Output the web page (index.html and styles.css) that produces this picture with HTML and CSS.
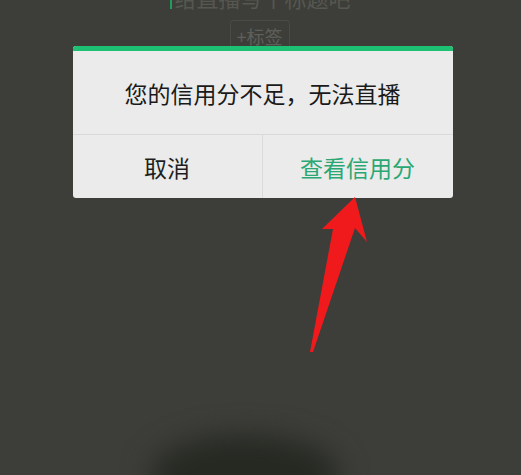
FILE: index.html
```html
<!DOCTYPE html>
<html>
<head>
<meta charset="utf-8">
<link rel="stylesheet" href="styles.css">
</head>
<body>
<div class="page">
  <div class="bg-title"><span class="cursor"></span>给直播写个标题吧</div>
  <div class="tag">+标签</div>
  <div class="dialog">
    <div class="dialog-bar"></div>
    <div class="dialog-msg">您的信用分不足，无法直播</div>
    <div class="dialog-actions">
      <div class="btn btn-cancel">取消</div>
      <div class="btn btn-ok">查看信用分</div>
    </div>
  </div>
  <div class="shadow"></div>
  <svg class="arrow" width="80" height="170" viewBox="0 0 80 170">
    <polygon points="55,2 67,47 55,33 13,157 10,157 33,34 22,34" fill="#f0191c"/>
  </svg>
</div>
</body>
</html>
```

FILE: styles.css
```css
html, body {
  margin: 0;
  padding: 0;
}
body {
  font-family: "Noto Sans CJK SC", "Noto Sans", sans-serif;
  background: #3c3d39;
}
.page {
  position: relative;
  width: 521px;
  height: 475px;
  overflow: hidden;
  background: #3d3e3a;
  display: flex;
  flex-direction: column;
  align-items: center;
}
.bg-title {
  margin-top: -18px;
  height: 30px;
  line-height: 30px;
  font-size: 22px;
  color: #56574f;
  display: flex;
  align-items: center;
  gap: 2px;
}
.cursor {
  display: inline-block;
  width: 2px;
  height: 24px;
  background: #1f9c5c;
}
.tag {
  margin-top: 8px;
  height: 26px;
  padding: 0 6px;
  font-size: 18px;
  line-height: 30px;
  color: #5e5f59;
  border: 1px solid #4a4b46;
  border-bottom: none;
  border-radius: 4px 4px 0 0;
  margin-left: -2px;
}
.dialog {
  position: relative;
  z-index: 1;
  margin-top: -1px;
  width: 380px;
  background: #ebebeb;
  border-radius: 3px;
  overflow: hidden;
  margin-left: 4px;
}
.dialog-bar {
  height: 5px;
  background: #1ec174;
}
.dialog-msg {
  height: 83px;
  display: flex;
  align-items: center;
  justify-content: center;
  font-size: 23px;
  color: #1a1a1a;
  border-bottom: 1px solid #d9d9d9;
}
.dialog-actions {
  display: flex;
  height: 63px;
}
.btn {
  flex: 1;
  display: flex;
  align-items: center;
  justify-content: center;
  font-size: 23px;
}
.btn-cancel {
  flex: 0 0 189px;
  color: #1e1e1e;
  border-right: 1px solid #dadada;
}
.btn-ok {
  color: #2aa874;
}
.shadow {
  position: absolute;
  left: 150px;
  top: 435px;
  width: 190px;
  height: 80px;
  border-radius: 50%;
  background: #262922;
  filter: blur(14px);
}
.arrow {
  position: absolute;
  left: 300px;
  top: 195px;
  z-index: 2;
}
```
